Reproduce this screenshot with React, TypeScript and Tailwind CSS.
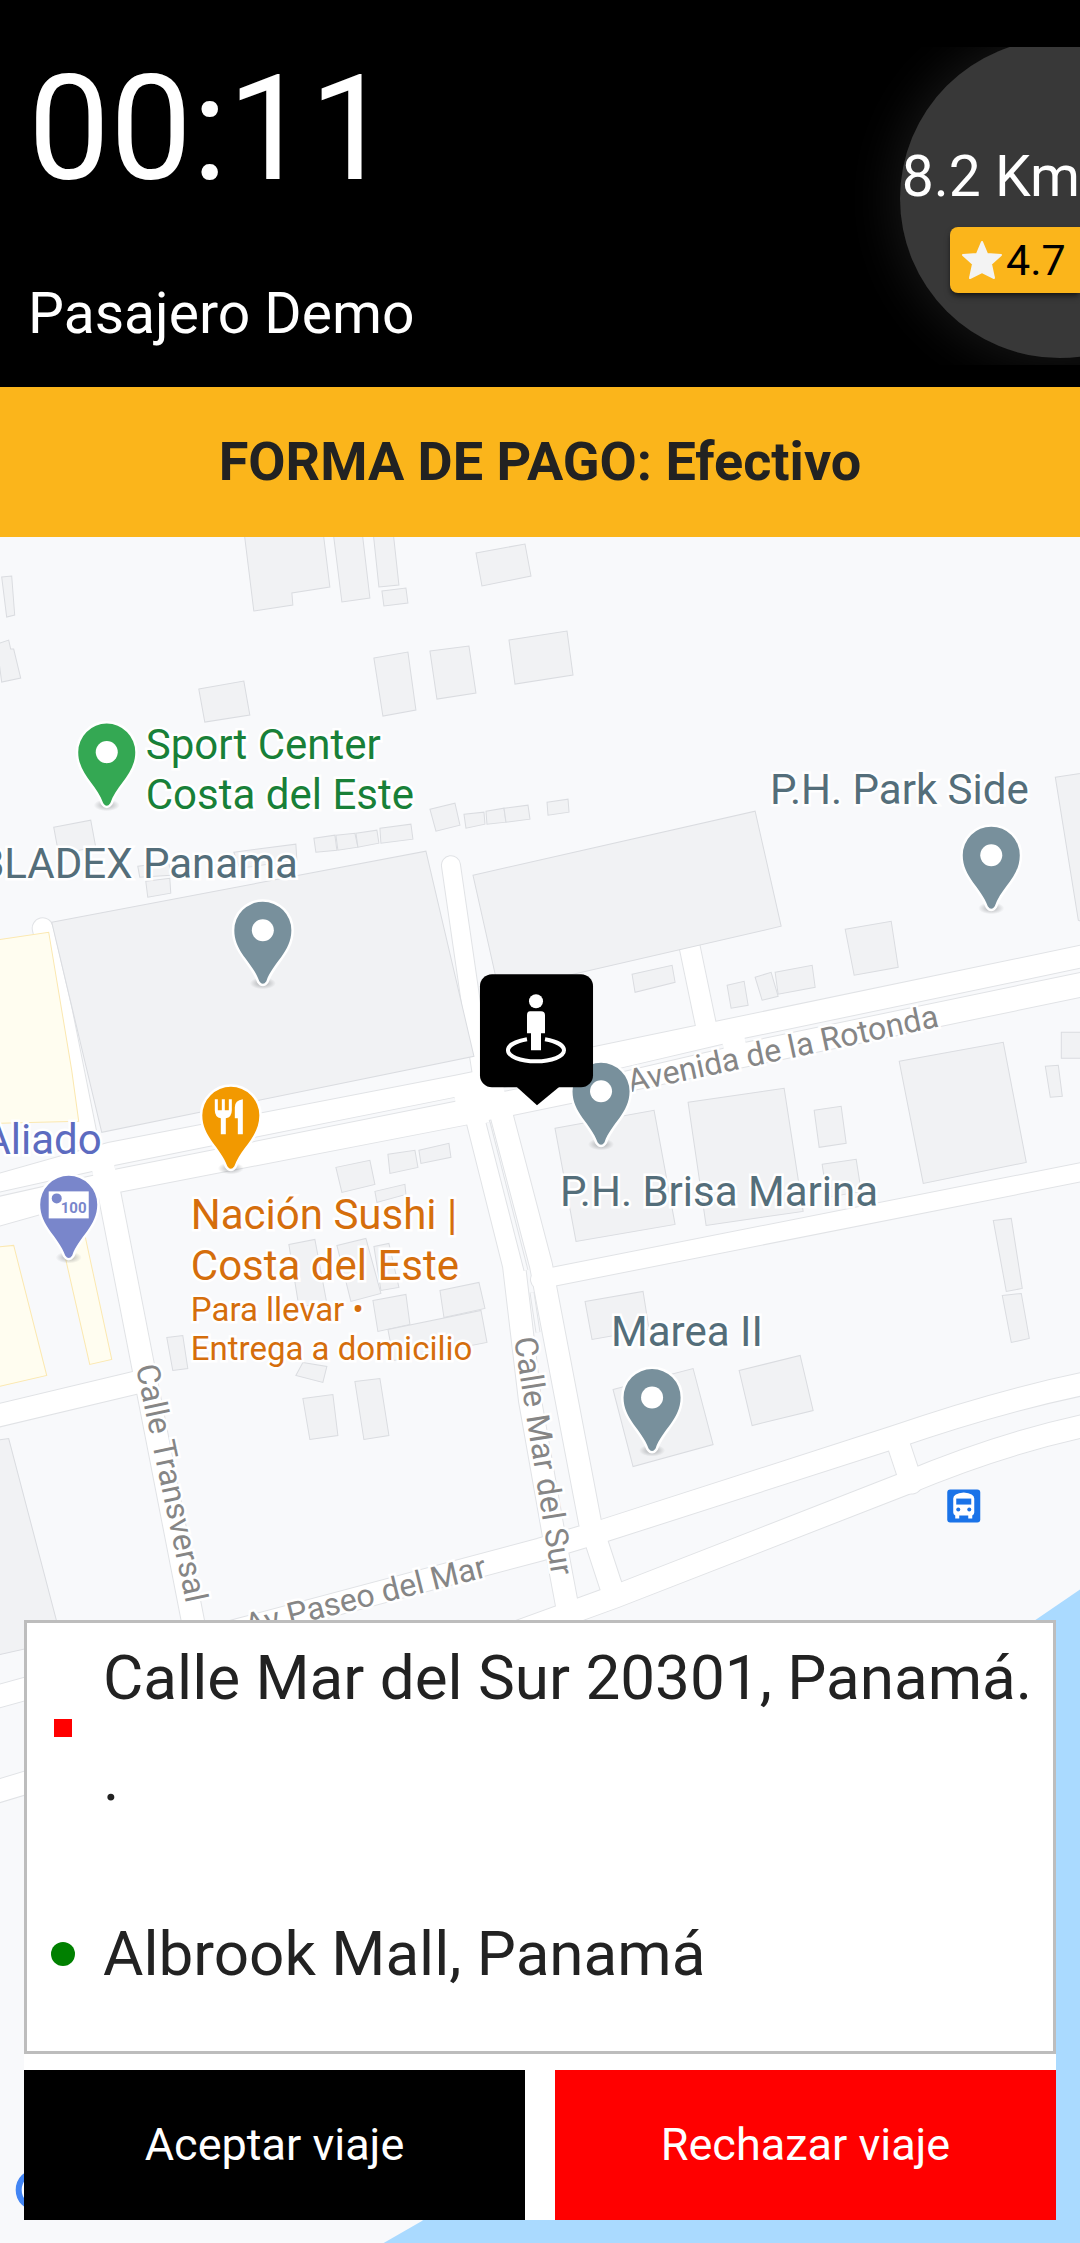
import React from 'react'

const buildings = [
  '244,530 254,611 293,605 292,593 330,587 323,530',
  '333,530 342,602 370,598 362,530',
  '373,530 379,587 399,585 393,530',
  '382,591 406,588 408,603 384,606',
  '476,553 525,544 531,576 482,586',
  '2,577 12,576 15,615 7,617',
  '-3,644 9,640 11,649 14,649 21,678 2,682',
  '374,658 408,652 416,710 383,716',
  '430,651 469,646 476,693 437,699',
  '509,640 567,631 573,675 515,684',
  '199,689 244,681 250,715 205,722',
  '54,827 91,820 96,847 59,854',
  '314,838 335,835 337,850 316,852',
  '336,835 355,833 358,847 338,850',
  '356,833 377,830 379,843 358,847',
  '380,828 411,824 413,839 381,843',
  '430,809 455,803 460,825 436,831',
  '464,814 484,812 485,824 466,828',
  '486,811 504,808 506,822 487,824',
  '504,808 528,805 530,819 506,822',
  '547,802 568,799 569,812 548,815',
  '234,852 296,844 297,860 240,868',
  '146,881 170,878 171,893 148,897',
  '138,866 169,862 171,875 140,877',
  '52,922 426,851 474,1056 102,1132',
  '473,875 755,811 781,926 499,991',
  '632,974 672,965 675,982 635,992',
  '727,985 744,981 748,1005 731,1008',
  '755,977 771,972 778,996 762,1000',
  '775,972 812,965 815,987 778,994',
  '845,929 891,921 898,967 854,975',
  '1055,777 1090,772 1090,925 1078,920',
  '1061,1032 1090,1032 1090,1058 1061,1058',
  '899,1061 1003,1042 1026,1162 923,1183',
  '555,1128 654,1110 675,1224 576,1241',
  '688,1102 784,1088 803,1211 706,1225',
  '814,1110 841,1106 846,1143 819,1147',
  '822,1164 856,1159 861,1191 827,1197',
  '1045,1066 1058,1065 1062,1096 1050,1097',
  '993,1220 1011,1218 1022,1288 1006,1291',
  '1002,1295 1021,1293 1029,1338 1011,1342',
  '585,1301 643,1291 649,1329 592,1339',
  '739,1370 800,1355 813,1410 752,1425',
  '613,1389 693,1368 713,1444 633,1466',
  '336,1167 370,1160 375,1184 342,1192',
  '388,1154 415,1150 418,1167 390,1173',
  '419,1150 449,1143 451,1157 421,1163',
  '375,1191 405,1184 406,1194 377,1202',
  '289,1244 315,1239 327,1303 299,1306',
  '337,1245 366,1238 381,1293 351,1301',
  '374,1246 389,1243 399,1287 381,1290',
  '373,1300 406,1294 410,1324 378,1331',
  '440,1290 479,1282 485,1308 444,1317',
  '388,1329 481,1310 487,1342 394,1360',
  '167,1337 183,1335 188,1368 173,1370',
  '303,1362 327,1366 323,1382 296,1375',
  '303,1398 333,1394 338,1435 310,1439',
  '355,1381 380,1378 389,1435 364,1439',
  '-5,1440 9,1438 62,1640 -5,1655',
]

const plazas = [
  '-5,940 49,932 72,1070 79,1121 -5,1123',
  '-5,1247 14,1245 47,1375 -5,1387',
  '66,1259 85,1234 112,1359 90,1364',
]

const roads = [
  { d: 'M43 928 L62 1010 L88 1140', w: 20 },
  { d: 'M451 865 L472 1010 L486 1100', w: 18 },
  { d: 'M689 944 L709 1040', w: 20 },
  { d: 'M109 1190 L195 1630', w: 22 },
  { d: 'M-10 1417 L145 1380', w: 22 },
  { d: 'M475 1110 L514 1265 L530 1400 L553 1530 L568 1610', w: 22 },
  { d: 'M499 1105 L541 1265 L590 1522 L614 1595', w: 22 },
  { d: 'M540 1279 L1090 1170', w: 18 },
  { d: 'M-10 1698 L240 1629 L540 1549 L604 1530 L893 1437 Q1000 1400 1090 1382', w: 22 },
  { d: 'M-10 1793 L480 1645 L615 1596 L905 1483 Q1000 1443 1090 1424', w: 22 },
  { d: 'M896 1437 L911 1482', w: 22 },
  { d: 'M-10 1202 L114 1167 L460 1100 L567 1078 L1090 969', w: 50 },
]

const medians = [
  'M-10 1196 L93 1173',
  'M115 1167 L455 1099',
  'M504 1089 L520 1086',
  'M488 1122 L526 1270',
  'M532 1292 L538 1332',
  'M620 1070 L723 1046',
  'M745 1040 L1090 968',
]

const pins = [
  { x: 107, y: 752, color: '#34a853' },
  { x: 263, y: 930, color: '#78909c' },
  { x: 991, y: 855, color: '#78909c' },
  { x: 601, y: 1091, color: '#78909c' },
  { x: 652, y: 1397, color: '#78909c' },
]

const PinShape = ({ color }: { color: string }) => (
  <>
    <ellipse cx="0" cy="53" rx="13" ry="6" fill="url(#pin-shadow)" />
    <path
      d="M0 -28.5 A28.5 28.5 0 0 1 28.5 0 C28.5 22 10 32 3.5 51 Q0 56 -3.5 51 C-10 32 -28.5 22 -28.5 0 A28.5 28.5 0 0 1 0 -28.5 Z"
      fill={color}
      stroke="#fff"
      strokeWidth="5"
      paintOrder="stroke"
    />
  </>
)

const CityMap = () => (
  <svg
    className="absolute inset-0 h-full w-full font-['Roboto',sans-serif]"
    viewBox="0 537 1080 1706"
    preserveAspectRatio="xMidYMid slice"
    role="img"
    aria-label="Mapa"
  >
    <defs>
      <radialGradient id="pin-shadow">
        <stop offset="0.4" stopColor="#3c4043" stopOpacity="0.25" />
        <stop offset="1" stopColor="#3c4043" stopOpacity="0" />
      </radialGradient>
    </defs>
    <rect x="0" y="537" width="1080" height="1706" fill="#f8f9fb" />
    <polygon points="1090,1582 1034,1620 900,1800 422,2220 382,2243 1090,2243" fill="#aadaff" />

    {roads.map((road) => (
      <path key={road.d} d={road.d} fill="none" stroke="#e1e3e6" strokeWidth={road.w + 2} strokeLinecap="round" />
    ))}
    {roads.map((road) => (
      <path key={road.d} d={road.d} fill="none" stroke="#fff" strokeWidth={road.w} strokeLinecap="round" />
    ))}
    {medians.map((d) => (
      <g key={d} fill="none">
        <path d={d} stroke="#e1e3e6" strokeWidth="5" />
        <path d={d} stroke="#f8f9fb" strokeWidth="3" />
      </g>
    ))}

    <g fill="#f1f2f4" stroke="#dadce0" strokeWidth="1">
      {buildings.map((points) => (
        <polygon key={points} points={points} />
      ))}
    </g>
    <g fill="#fffdf0" stroke="#fbe8b0" strokeWidth="1">
      {plazas.map((points) => (
        <polygon key={points} points={points} />
      ))}
    </g>

    {/* street names */}
    <g fill="#868686" fontSize="32" stroke="#fff" strokeWidth="5" paintOrder="stroke">
      <text transform="translate(630 1092) rotate(-12)">Avenida de la Rotonda</text>
      <text transform="translate(136 1366) rotate(78)">Calle Transversal</text>
      <text transform="translate(514 1338) rotate(81)">Calle Mar del Sur</text>
      <text transform="translate(488 1576) rotate(-14)" textAnchor="end">
        Av Paseo del Mar
      </text>
    </g>

    {pins.map((pin) => (
      <g key={`${pin.x}-${pin.y}`} transform={`translate(${pin.x} ${pin.y})`}>
        <PinShape color={pin.color} />
        <circle r="11" fill="#fff" />
      </g>
    ))}
    <g transform="translate(231 1115)">
      <PinShape color="#f29900" />
      <path
        d="M-16 -16 V-5 Q-16 2 -10 3 V19 H-5 V3 Q1 2 1 -5 V-16 H-2 V-5 H-6 V-16 H-9 V-5 H-13 V-16 Z M12 -16 V19 H7 V3 H4 V-8 Q4 -15 12 -16 Z"
        fill="#fff"
      />
    </g>
    <g transform="translate(69 1204)">
      <PinShape color="#7986cb" />
      <rect x="-20" y="-13" width="40" height="27" fill="#fff" />
      <circle cx="-12" cy="-6" r="5" fill="#7986cb" />
      <text x="-8" y="9" fontSize="15" fontWeight="700" fill="#7986cb">
        100
      </text>
    </g>

    {/* place names */}
    <g fontSize="42" stroke="#fff" strokeWidth="5" paintOrder="stroke">
      <g fill="#188038">
        <text x="146" y="759">Sport Center</text>
        <text x="146" y="809">Costa del Este</text>
      </g>
      <g fill="#546e7a">
        <text x="298" y="878" textAnchor="end">BLADEX Panama</text>
        <text x="770" y="804">P.H. Park Side</text>
        <text x="560" y="1206">P.H. Brisa Marina</text>
        <text x="611" y="1346">Marea II</text>
      </g>
      <text x="102" y="1154" textAnchor="end" fill="#5c6bc0">Aliado</text>
      <g fill="#d56e0c">
        <text x="191" y="1229">Nación Sushi |</text>
        <text x="191" y="1280">Costa del Este</text>
        <g fontSize="33">
          <text x="191" y="1321">Para llevar •</text>
          <text x="191" y="1360">Entrega a domicilio</text>
        </g>
      </g>
    </g>

    {/* bus stop */}
    <g transform="translate(947 1489)">
      <rect width="33" height="33" rx="3" fill="#1a73e8" />
      <path
        d="M6 9 Q6 4 16.500 3 Q27 4 27 9 V23 Q27 25 25 26 V29 H21 V26 H12 V29 H8 V26 Q6 25 6 23 Z"
        fill="#fff"
      />
      <path d="M9 9 H24 V15 H9 Z" fill="#1a73e8" />
      <circle cx="11" cy="20" r="2" fill="#1a73e8" />
      <circle cx="22" cy="20" r="2" fill="#1a73e8" />
    </g>

    {/* pickup marker */}
    <rect x="480" y="974" width="113" height="113" rx="12" />
    <path d="M516 1086 H560 L537 1105 Z" />
    <path
      d="M527 1039 C516 1041 508 1045 508 1050 C508 1056 520 1061 536 1061 C552 1061 564 1056 564 1050 C564 1045 556 1041 545 1039"
      fill="none"
      stroke="#fff"
      strokeWidth="4"
    />
    <circle cx="536" cy="1001" r="7" fill="#fff" />
    <path d="M530 1011 H541 Q545 1011 545 1015 V1033 H541 V1050 H531 V1033 H527 V1015 Q527 1011 530 1011 Z" fill="#fff" />

    {/* map provider mark */}
    <circle cx="37" cy="2189" r="18" fill="#fff" stroke="#4285f4" strokeWidth="6" />
  </svg>
)

const TripHeader = () => (
  <header className="flex justify-between bg-black text-white">
    <div className="flex flex-col pl-7">
      <span className="mt-12 text-[146px] leading-[164px]">00:11</span>
      <span className="mt-16 mb-9 text-[57px] leading-[75px]">Pasajero Demo</span>
    </div>
    <div className="relative mt-[47px] flex h-[318px] w-[240px] shrink-0 flex-col items-end overflow-hidden">
      {/* round badge, cut by the screen edge */}
      <div className="absolute -top-2 left-[60px] size-[319px] rounded-full bg-[#383838] shadow-[0_0_50px_6px_rgba(255,255,255,0.09)]" />
      <span className="relative mt-[96px] text-[57px] leading-[68px] whitespace-nowrap">8.2 Km</span>
      <div className="relative mt-[16px] flex h-[66px] w-[130px] items-center gap-1 rounded-l-lg bg-[#fbb51b] pl-3 text-black shadow-md shadow-black/50">
        <svg className="size-10" viewBox="0 0 40 40" aria-hidden="true">
          <path
            d="M20 2 L25 14 L39 15 L29 24 L32 38 L20 32 L8 38 L11 24 L1 15 L15 14 Z"
            fill="#f3f3f3"
            stroke="#f3f3f3"
            strokeWidth="2"
            strokeLinejoin="round"
          />
        </svg>
        <span className="text-[43px] leading-[66px]">4.7</span>
      </div>
    </div>
  </header>
)

const App = () => {
  return (
    <main className="flex min-h-screen flex-col overflow-x-hidden bg-[#f8f9fb] font-['Roboto',sans-serif] text-[#222]">
      <TripHeader />
      <p className="bg-[#fbb51b] py-10 text-center text-[54px] leading-[70px] font-bold">FORMA DE PAGO: Efectivo</p>

      <section className="relative flex flex-1 flex-col justify-end overflow-hidden px-6 pt-[1083px] pb-6">
        <CityMap />
        <div className="relative flex flex-col gap-4 bg-white">
          <ul className="flex flex-col gap-[74px] border-[3px] border-[#bdbdbd] pt-1 pb-[47px] pl-6 text-[62px] leading-[101px]">
            <li className="flex items-center gap-7">
              <span className="mx-[3px] size-[18px] shrink-0 bg-[#ff0000]" />
              <span>
                Calle Mar del Sur 20301, Panamá.
                <br />.
              </span>
            </li>
            <li className="flex items-center gap-7">
              <span className="size-6 shrink-0 rounded-full bg-[#008000]" />
              <span>Albrook Mall, Panamá</span>
            </li>
          </ul>
          <div className="grid grid-cols-2 gap-[30px] text-[45px] leading-[70px] text-white">
            <button type="button" className="bg-black py-10">
              Aceptar viaje
            </button>
            <button type="button" className="bg-[#ff0000] py-10">
              Rechazar viaje
            </button>
          </div>
        </div>
      </section>
    </main>
  )
}

export default App
